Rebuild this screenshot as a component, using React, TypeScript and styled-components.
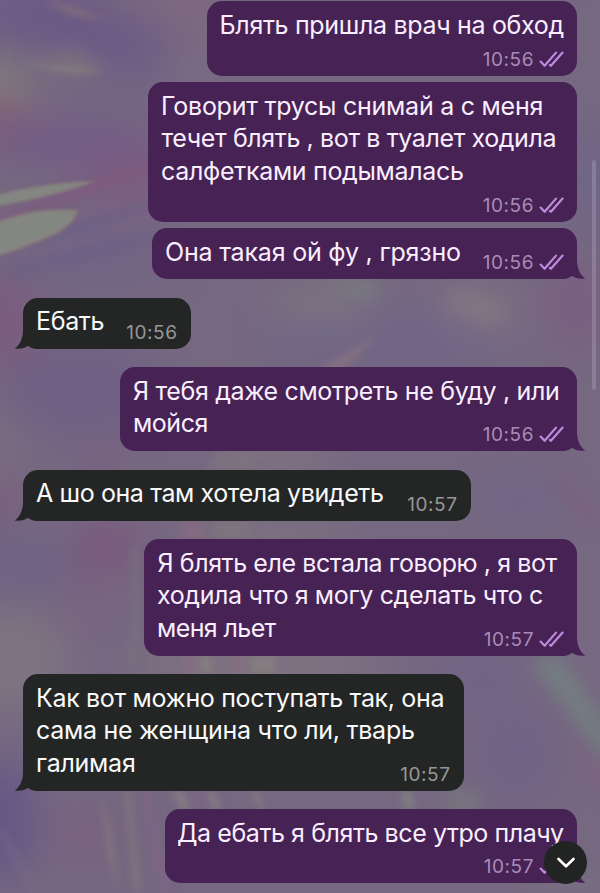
import React from 'react';
import styled, { createGlobalStyle } from 'styled-components';

const GlobalStyle = createGlobalStyle`
  * { box-sizing: border-box; }
  body { margin: 0; background: #74667f; font-family: Inter, "Liberation Sans", sans-serif; }
`;

const Screen = styled.main`
  position: relative;
  width: 600px;
  height: 893px;
  overflow: hidden;
  isolation: isolate;
`;

const Wallpaper = styled.svg`
  position: absolute;
  inset: 0;
  z-index: -1;
`;

const Thread = styled.div`
  display: flex;
  flex-direction: column;
  padding: 1px 23px 0;
`;

const Bubble = styled.div<{ $out: boolean; $w: number; $h: number; $gap: number }>`
  position: relative;
  flex: none;
  display: grid;
  align-self: ${p => (p.$out ? 'flex-end' : 'flex-start')};
  width: ${p => p.$w}px;
  height: ${p => p.$h}px;
  margin-top: ${p => p.$gap}px;
  padding: 7.5px 13px 5px;
  border-radius: 15px;
  background: ${p => (p.$out ? '#462255' : '#242625')};
  color: ${p => (p.$out ? '#fbeeff' : '#fafafa')};
`;

const Body = styled.div`
  grid-area: 1 / 1;
  align-self: start;
`;

const Line = styled.div<{ $ls: number; $dx: number }>`
  font-size: 25px;
  line-height: 32.8px;
  white-space: pre;
  letter-spacing: ${p => p.$ls}px;
  margin-left: ${p => p.$dx}px;
`;

const Meta = styled.div<{ $out: boolean }>`
  grid-area: 1 / 1;
  align-self: end;
  justify-self: end;
  display: flex;
  align-items: center;
  gap: 5px;
  height: 22px;
  margin-right: ${p => (p.$out ? 0 : 0.5)}px;
  font-size: 19px;
  line-height: 22px;
  letter-spacing: 0.55px;
  color: ${p => (p.$out ? '#a98bb5' : '#969796')};
`;

const Ticks = styled.svg`
  display: block;
  margin-top: -1px;
`;

const Tail = styled.svg<{ $out: boolean }>`
  position: absolute;
  bottom: 0;
  ${p => (p.$out ? 'right: -9px;' : 'left: -9px; transform: scaleX(-1);')}
`;

const ScrollThumb = styled.div`
  position: absolute;
  right: 4px;
  top: 160px;
  width: 4px;
  height: 230px;
  border-radius: 2px;
  background: rgba(160, 148, 178, 0.5);
`;

const DownButton = styled.button`
  position: absolute;
  left: 544px;
  top: 841px;
  width: 43px;
  height: 43px;
  padding: 0;
  border: 0;
  border-radius: 50%;
  background: #222423;
  display: grid;
  place-items: center;
`;

type Message = {
  out: boolean;
  w: number;
  h: number;
  gap: number;
  time: string;
  tail: boolean;
  lines: [text: string, tracking: number, offset: number][];
};

const messages: Message[] = [
  { out: true, w: 370, h: 75, gap: 0, time: '10:56', tail: false, lines: [['Блять пришла врач на обход', -0.325, -0.5]] },
  {
    out: true, w: 429, h: 140, gap: 6, time: '10:56', tail: false,
    lines: [
      ['Говорит трусы снимай а с меня', -0.25, 0],
      ['течет блять , вот в туалет ходила', -0.393, 0.5],
      ['салфетками подымалась', -0.312, 0],
    ],
  },
  { out: true, w: 425, h: 51, gap: 6, time: '10:56', tail: true, lines: [['Она такая ой фу , грязно', -0.2, 0]] },
  { out: false, w: 168, h: 51.5, gap: 18.5, time: '10:56', tail: true, lines: [['Ебать', -0.352, 0]] },
  {
    out: true, w: 457, h: 84, gap: 18, time: '10:56', tail: true,
    lines: [['Я тебя даже смотреть не буду , или', -0.346, 0], ['мойся', -0.45, 0]],
  },
  { out: false, w: 448, h: 51.5, gap: 18.5, time: '10:57', tail: true, lines: [['А шо она там хотела увидеть', -0.395, 0]] },
  {
    out: true, w: 433, h: 117, gap: 18, time: '10:57', tail: true,
    lines: [
      ['Я блять еле встала говорю , я вот', -0.42, 0.5],
      ['ходила что я могу сделать что с', -0.363, 0],
      ['меня льет', -0.6, 0],
    ],
  },
  {
    out: false, w: 441, h: 117, gap: 18, time: '10:57', tail: true,
    lines: [
      ['Как вот можно поступать так, она', -0.34, 0],
      ['сама не женщина что ли, тварь', -0.27, 0],
      ['галимая', -0.25, 0],
    ],
  },
  { out: true, w: 412, h: 74, gap: 18, time: '10:57', tail: true, lines: [['Да ебать я блять все утро плачу', -0.432, -1]] },
];

function MessageBubble({ m }: { m: Message }) {
  return (
    <Bubble $out={m.out} $w={m.w} $h={m.h} $gap={m.gap}>
      {m.tail && (
        <Tail $out={m.out} width="26" height="26" viewBox="0 0 26 26">
          <path d="M8 0H17V8C17.3 16 20.5 22.5 25.3 25.5C20 26.4 15 25 12 22.8C10 24.5 7 26 2 26Z" fill={m.out ? '#462255' : '#242625'} />
        </Tail>
      )}
      <Body>
        {m.lines.map(([text, ls, dx]) => (
          <Line key={text} $ls={ls} $dx={dx}>{text}</Line>
        ))}
      </Body>
      <Meta $out={m.out}>
        <span>{m.time}</span>
        {m.out && (
          <Ticks width="25" height="17" viewBox="0 0 25 17" fill="none" stroke="#c08add" strokeWidth="2.2" strokeLinecap="round" strokeLinejoin="round">
            <path d="M1.6 10.6L5.6 14.8L17 1.6M11 14L11.9 14.8L23.6 1.6" />
          </Ticks>
        )}
      </Meta>
    </Bubble>
  );
}

function Backdrop() {
  return (
    <Wallpaper width="600" height="893" viewBox="0 0 600 893" colorInterpolationFilters="sRGB">
      <defs>
        <filter id="wide" x="-20%" y="-20%" width="140%" height="140%"><feGaussianBlur stdDeviation="20" /></filter>
        <filter id="mid" x="-20%" y="-20%" width="140%" height="140%"><feGaussianBlur stdDeviation="9" /></filter>
        <filter id="fine" x="-20%" y="-20%" width="140%" height="140%"><feGaussianBlur stdDeviation="1.6" /></filter>
        <filter id="streak" x="-20%" y="-20%" width="140%" height="140%"><feGaussianBlur stdDeviation="3.5" /></filter>
      </defs>
      <rect width="600" height="893" fill="#766881" />
      <g filter="url(#wide)" opacity=".9">
        <path d="M-20 -20H70L210 60L200 90L-20 45Z" fill="#6c5986" />
        <path d="M90 -20H220V50Z" fill="#806a7f" />
        <ellipse cx="190" cy="70" rx="30" ry="25" fill="#7d6c84" />
        <ellipse cx="0" cy="80" rx="36" ry="28" fill="#827e7b" />
        <ellipse cx="-5" cy="120" rx="42" ry="16" fill="#865672" />
        <ellipse cx="75" cy="142" rx="90" ry="24" fill="#725b87" />
        <ellipse cx="130" cy="178" rx="60" ry="25" fill="#7d5c82" />
        <ellipse cx="90" cy="235" rx="70" ry="14" fill="#6e6088" />
        <ellipse cx="60" cy="270" rx="120" ry="15" fill="#6f6486" />
        <ellipse cx="0" cy="325" rx="45" ry="50" fill="#7c5c7e" />
        <ellipse cx="80" cy="390" rx="80" ry="50" fill="#6f6085" />
        <ellipse cx="-5" cy="450" rx="25" ry="40" fill="#7c7080" />
        <ellipse cx="100" cy="460" rx="25" ry="10" fill="#7d5b7c" />
        <ellipse cx="-5" cy="500" rx="30" ry="20" fill="#795a7b" />
        <ellipse cx="105" cy="548" rx="34" ry="20" fill="#7e507b" />
        <ellipse cx="20" cy="565" rx="60" ry="26" fill="#6c6286" />
        <ellipse cx="90" cy="610" rx="35" ry="22" fill="#7b637f" />
        <ellipse cx="10" cy="660" rx="60" ry="50" fill="#7f7681" />
        <ellipse cx="0" cy="820" rx="35" ry="60" fill="#625586" />
        <ellipse cx="85" cy="835" rx="40" ry="35" fill="#796280" />
        <ellipse cx="385" cy="340" rx="120" ry="25" fill="#6e6489" />
        <ellipse cx="325" cy="305" rx="55" ry="20" fill="#7d777f" />
        <ellipse cx="480" cy="310" rx="42" ry="16" fill="#867882" />
        <ellipse cx="575" cy="305" rx="25" ry="45" fill="#7b5c80" />
        <ellipse cx="600" cy="180" rx="20" ry="60" fill="#6a6387" />
        <ellipse cx="590" cy="60" rx="14" ry="60" fill="#796a84" />
        <ellipse cx="280" cy="460" rx="60" ry="14" fill="#837980" />
        <ellipse cx="270" cy="530" rx="90" ry="12" fill="#81787f" />
        <ellipse cx="520" cy="500" rx="40" ry="25" fill="#6f6689" />
        <ellipse cx="260" cy="665" rx="130" ry="15" fill="#877d82" />
        <ellipse cx="480" cy="680" rx="45" ry="30" fill="#6f6388" />
        <ellipse cx="515" cy="755" rx="45" ry="45" fill="#6f6286" />
        <ellipse cx="570" cy="890" rx="60" ry="10" fill="#7a757f" />
      </g>
      <g filter="url(#mid)" opacity=".75">
        <path d="M25 60L75 50L110 70L70 77Z" fill="#7f767e" />
        <path d="M350 280L380 287L374 298L330 287Z" fill="#7a8782" />
        <path d="M455 288L510 310L490 325L445 304Z" fill="#857982" />
        <path d="M320 375L380 325L352 368Z" fill="#7c6b84" />
        <path d="M545 455L600 520V532L570 500Z" fill="#825b7c" />
        <path d="M530 660L560 656L610 730V765Z" fill="#738682" />
        <path d="M560 732L605 800V770Z" fill="#80607e" />
        <path d="M440 793L475 793L485 809H450Z" fill="#78817c" />
      </g>
      <g filter="url(#streak)" opacity=".85">
        <path d="M12 58C45 68 80 66 105 71C75 76 45 70 12 58Z" fill="#88817e" />
        <path d="M40 -2L110 20L72 14Z" fill="#8c7b79" />
        <path d="M0 212L100 178L150 160L145 170L80 200L0 221Z" fill="#84587b" opacity=".55" />
        <path d="M80 214L150 190V193L70 222ZM40 250L150 215V220L30 258Z" fill="#866484" opacity=".5" />
        <path d="M70 225L150 203V208L60 236ZM10 268L150 236V242L10 276Z" fill="#655c8c" opacity=".4" />
        <path d="M310 371L383 331L345 371Z" fill="#8a747e" opacity=".5" />
        <path d="M182 656H192V674H184ZM235 656H243V674H237ZM183 521H203V539H181Z" fill="#956a84" opacity=".6" />
        <path d="M200 656H212V674H200ZM250 656H275V674H252Z" fill="#8d8881" opacity=".6" />
        <path d="M172 791H182L191 809H180ZM206 791H214L221 809H213ZM250 791H257L265 809H260Z" fill="#8d8685" opacity=".8" />
        <path d="M124 791H131L142 893H134ZM100 791L113 830L119 893L106 850Z" fill="#85807f" opacity=".6" />
        <path d="M140 791H150L170 893H160ZM192 791H204V809H198Z" fill="#83648a" opacity=".6" />
        <path d="M0 820L36 893H29L0 835ZM9 836L45 893H40Z" fill="#80728b" opacity=".4" />
        <path d="M215 451H267L245 470H205ZM215 521H250V539H211Z" fill="#87837f" opacity=".35" />
        <path d="M130 545H140V670H128Z" fill="#79797f" opacity=".4" />
        <path d="M399 791H411L416 809H404Z" fill="#7c827f" />
      </g>
      <g filter="url(#fine)">
        <path d="M-5 195C30 186 66 181 97 181C66 192 35 200 -5 207Z" fill="#848681" stroke="#856579" strokeWidth="1" />
        <path d="M-5 222C27 211 52 207 79 210C72 229 54 236 35 243C22 249 10 253 -5 257Z" fill="#848681" stroke="#856375" strokeWidth="1.2" />
        <path d="M315 371L372 341L340 371Z" fill="#8b7a80" opacity=".3" />
      </g>
    </Wallpaper>
  );
}

export default function App() {
  return (
    <Screen>
      <GlobalStyle />
      <Backdrop />
      <Thread>
        {messages.map(m => <MessageBubble key={m.lines[0][0]} m={m} />)}
      </Thread>
      <ScrollThumb />
      <DownButton aria-label="Scroll down">
        <svg width="20" height="14" viewBox="0 0 20 14" fill="none" stroke="#fff" strokeWidth="2.6" strokeLinecap="round" strokeLinejoin="round">
          <path d="M2.5 3L10 10.3L17.5 3" />
        </svg>
      </DownButton>
    </Screen>
  );
}
